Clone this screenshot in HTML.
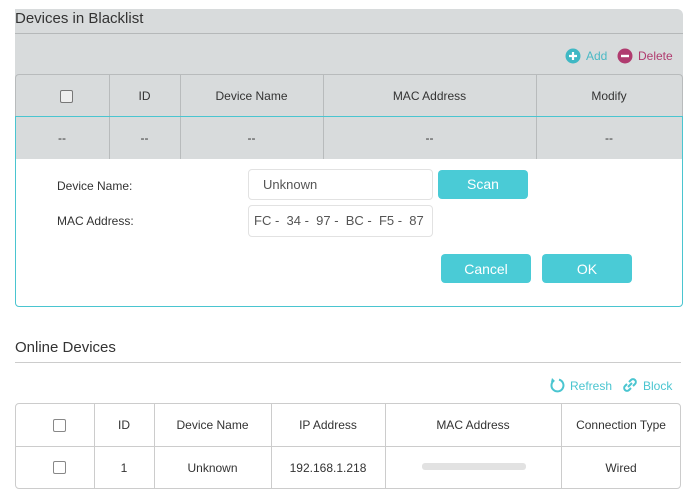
<!DOCTYPE html><html><head><style>
body{margin:0;width:690px;height:503px;background:#fff;font-family:"Liberation Sans",sans-serif;position:relative;overflow:hidden;color:#333}
.a{position:absolute}
.t{font-size:12px;text-align:center}
</style></head><body>
<div class="a" style="left:15px;top:9px;width:668px;height:150px;background:#d8dbdc;border-top-right-radius:6px"></div>
<div class="a" style="left:15px;top:10px;font-size:15px;color:#333">Devices in Blacklist</div>
<div class="a" style="left:15px;top:33px;width:668px;height:1px;background:#b5b8b9"></div>
<svg class="a" style="left:565px;top:48px" width="16" height="16"><circle cx="8" cy="8" r="7.5" fill="#3fb8c4"/><path d="M8 4v8M4 8h8" stroke="#fff" stroke-width="2.2"/></svg>
<div class="a" style="left:586px;top:49px;font-size:12px;color:#4ab9c5">Add</div>
<svg class="a" style="left:617px;top:48px" width="16" height="16"><circle cx="8" cy="8" r="7.5" fill="#b03b6f"/><path d="M4 8h8" stroke="#fff" stroke-width="2.4"/></svg>
<div class="a" style="left:638px;top:49px;font-size:12px;color:#b03b6f">Delete</div>
<div class="a" style="left:15px;top:74px;width:666px;height:84px;border:1px solid #b8bbbc;border-bottom:none;border-radius:4px 4px 0 0"></div>
<div class="a" style="left:109px;top:75px;width:1px;height:84px;background:#b8bbbc"></div>
<div class="a" style="left:180px;top:75px;width:1px;height:84px;background:#b8bbbc"></div>
<div class="a" style="left:323px;top:75px;width:1px;height:84px;background:#b8bbbc"></div>
<div class="a" style="left:536px;top:75px;width:1px;height:84px;background:#b8bbbc"></div>
<div class="a" style="left:60px;top:90px;width:11px;height:11px;border:1px solid #777;border-radius:2px;background:#eee"></div>
<div class="a t" style="left:109px;top:89px;width:71px">ID</div>
<div class="a t" style="left:180px;top:89px;width:143px">Device Name</div>
<div class="a t" style="left:323px;top:89px;width:213px">MAC Address</div>
<div class="a t" style="left:536px;top:89px;width:146px">Modify</div>
<div class="a t" style="left:15px;top:131px;width:94px">--</div>
<div class="a t" style="left:109px;top:131px;width:71px">--</div>
<div class="a t" style="left:180px;top:131px;width:143px">--</div>
<div class="a t" style="left:323px;top:131px;width:213px">--</div>
<div class="a t" style="left:536px;top:131px;width:146px">--</div>
<div class="a" style="left:15px;top:116px;width:666px;height:189px;border:1px solid #4ac5d0;border-radius:0 0 4px 4px"></div>
<div class="a" style="left:16px;top:159px;width:666px;height:146px;background:#fff;border-radius:0 0 4px 4px"></div>
<div class="a" style="left:57px;top:179px;font-size:12px">Device Name:</div>
<div class="a" style="left:57px;top:214px;font-size:12px">MAC Address:</div>
<div class="a" style="left:248px;top:169px;width:185px;height:31px;border:1px solid #e2e2e2;border-radius:4px;box-sizing:border-box;font-size:13px;line-height:29px;padding-left:14px;color:#555">Unknown</div>
<div class="a" style="left:248px;top:205px;width:185px;height:32px;border:1px solid #e2e2e2;border-radius:4px;box-sizing:border-box;font-size:13px;line-height:30px;padding-left:5px;color:#555;white-space:nowrap;overflow:hidden">FC -&nbsp; 34 -&nbsp; 97 -&nbsp; BC -&nbsp; F5 -&nbsp; 87</div>
<div class="a" style="left:438px;top:170px;width:90px;height:29px;background:#4acbd6;border-radius:4px;color:#fff;font-size:14px;text-align:center;line-height:29px">Scan</div>
<div class="a" style="left:441px;top:254px;width:90px;height:29px;background:#4acbd6;border-radius:4px;color:#fff;font-size:14px;text-align:center;line-height:30px">Cancel</div>
<div class="a" style="left:542px;top:254px;width:90px;height:29px;background:#4acbd6;border-radius:4px;color:#fff;font-size:14px;text-align:center;line-height:30px">OK</div>
<div class="a" style="left:15px;top:339px;font-size:15px">Online Devices</div>
<div class="a" style="left:15px;top:362px;width:666px;height:1px;background:#ccc"></div>
<svg class="a" style="left:549px;top:377px" width="16" height="16"><path d="M5 3.5A6 6 0 1 0 10 2.6" fill="none" stroke="#4ac5d0" stroke-width="2"/><path d="M3 1l3 3-4 1z" fill="#4ac5d0"/></svg>
<div class="a" style="left:570px;top:379px;font-size:12px;color:#4ac5d0">Refresh</div>
<svg class="a" style="left:622px;top:377px" width="16" height="16"><path d="M7 5l2-2a2.5 2.5 0 0 1 4 4l-2 2M9 11l-2 2a2.5 2.5 0 0 1-4-4l2-2M6 10l4-4" fill="none" stroke="#4ac5d0" stroke-width="2"/></svg>
<div class="a" style="left:643px;top:379px;font-size:12px;color:#4ac5d0">Block</div>
<div class="a" style="left:15px;top:403px;width:664px;height:84px;border:1px solid #ccc;border-radius:4px"></div>
<div class="a" style="left:15px;top:446px;width:666px;height:1px;background:#ccc"></div>
<div class="a" style="left:94px;top:404px;width:1px;height:84px;background:#ccc"></div>
<div class="a" style="left:154px;top:404px;width:1px;height:84px;background:#ccc"></div>
<div class="a" style="left:271px;top:404px;width:1px;height:84px;background:#ccc"></div>
<div class="a" style="left:385px;top:404px;width:1px;height:84px;background:#ccc"></div>
<div class="a" style="left:561px;top:404px;width:1px;height:84px;background:#ccc"></div>
<div class="a" style="left:53px;top:419px;width:11px;height:11px;border:1px solid #888;border-radius:2px"></div>
<div class="a" style="left:53px;top:461px;width:11px;height:11px;border:1px solid #888;border-radius:2px"></div>
<div class="a t" style="left:94px;top:418px;width:60px">ID</div>
<div class="a t" style="left:154px;top:418px;width:117px">Device Name</div>
<div class="a t" style="left:271px;top:418px;width:114px">IP Address</div>
<div class="a t" style="left:385px;top:418px;width:176px">MAC Address</div>
<div class="a t" style="left:561px;top:418px;width:120px">Connection Type</div>
<div class="a t" style="left:94px;top:461px;width:60px">1</div>
<div class="a t" style="left:154px;top:461px;width:117px">Unknown</div>
<div class="a t" style="left:271px;top:461px;width:114px">192.168.1.218</div>
<div class="a" style="left:422px;top:463px;width:104px;height:7px;background:#e2e2e2;border-radius:3px"></div>
<div class="a t" style="left:561px;top:461px;width:120px">Wired</div>
</body></html>
